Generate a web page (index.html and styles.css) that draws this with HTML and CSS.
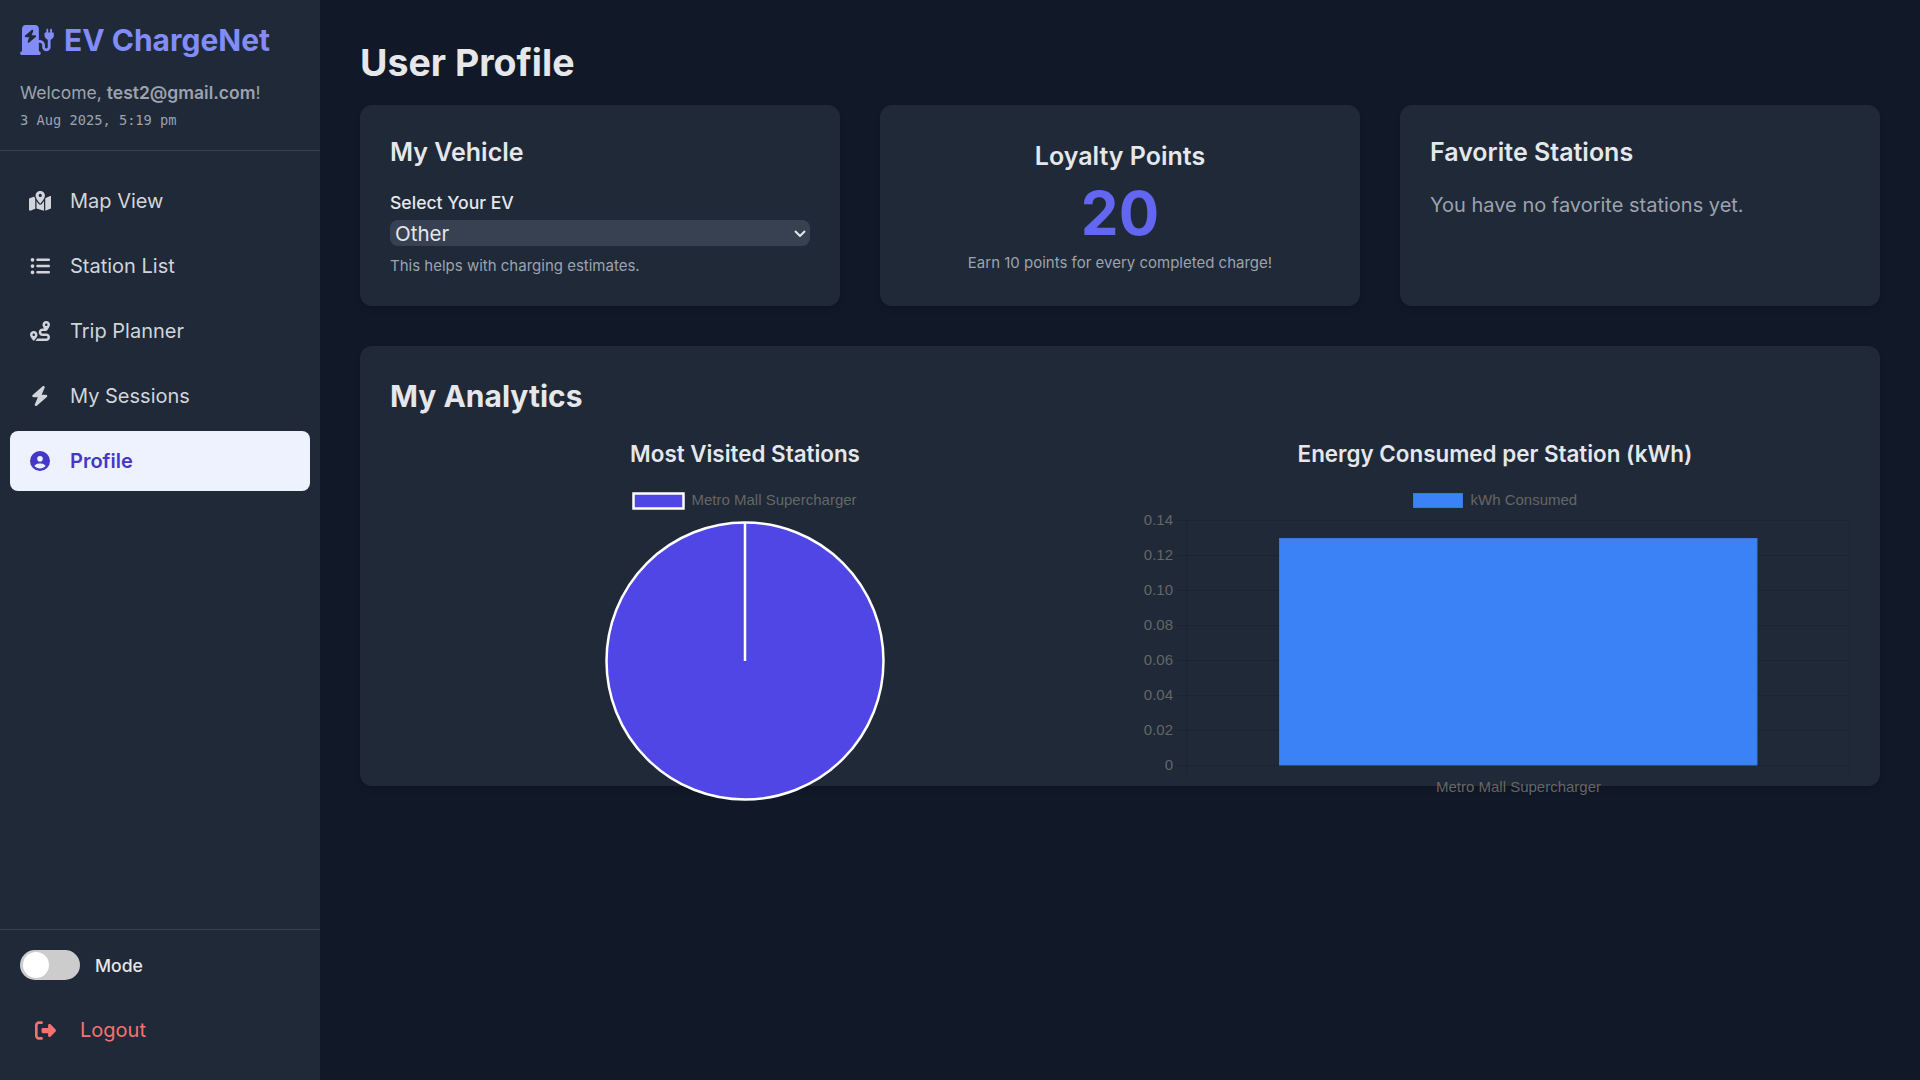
FILE: index.html
```html
<!DOCTYPE html>
<html lang="en">
<head>
<meta charset="utf-8">
<title>EV ChargeNet - User Profile</title>
<link rel="stylesheet" href="styles.css">
</head>
<body>
<div class="app">
  <aside class="sidebar">
    <header class="brand">
      <h1 class="logo">
        <svg class="logo-icon" viewBox="0 0 576 512"><path d="M96 0C60.7 0 32 28.7 32 64V448c-17.7 0-32 14.3-32 32s14.3 32 32 32H320c17.7 0 32-14.3 32-32s-14.3-32-32-32V304h16c22.1 0 40 17.9 40 40v32c0 39.8 32.2 72 72 72s72-32.2 72-72V252.3c32.5-10.2 56-40.5 56-76.3V144c0-8.8-7.2-16-16-16H544V80c0-8.8-7.2-16-16-16s-16 7.2-16 16v48H480V80c0-8.8-7.2-16-16-16s-16 7.2-16 16v48H432c-8.8 0-16 7.2-16 16v32c0 35.8 23.5 66.1 56 76.3V376c0 13.3-10.7 24-24 24s-24-10.7-24-24V344c0-48.6-39.4-88-88-88H320V64c0-35.3-28.7-64-64-64H96zM216.9 82.7c6 4 8.5 11.5 6.3 18.3l-25 74.9H256c6.7 0 12.7 4.2 15 10.4s.5 13.3-4.6 17.7l-112 96c-5.5 4.7-13.4 5.1-19.3 1.1s-8.5-11.5-6.3-18.3l25-74.9H96c-6.7 0-12.7-4.2-15-10.4s-.5-13.3 4.6-17.7l112-96c5.5-4.7 13.4-5.1 19.3-1.1z"/></svg>
        <span>EV ChargeNet</span>
      </h1>
      <p class="welcome">Welcome, <strong>test2@gmail.com</strong>!</p>
      <p class="clock">3 Aug 2025, 5:19 pm</p>
    </header>
    <nav class="nav">
      <a class="nav-item"><span class="nav-icon"><svg viewBox="0 0 576 512"><path d="M408 120c0 54.6-73.1 151.9-105.2 192c-7.7 9.6-22 9.6-29.6 0C241.1 271.9 168 174.6 168 120C168 53.7 221.7 0 288 0s120 53.7 120 120zm8 80.4c3.5-6.9 6.7-13.8 9.6-20.6c.5-1.2 1-2.5 1.5-3.7l116-46.4C558.9 123.4 576 135 576 152V422.8c0 9.8-6 18.6-15.1 22.3L416 503V200.4zM137.6 138.3c2.4 14.1 7.2 28.3 12.8 41.5c2.9 6.8 6.1 13.7 9.6 20.6V451.8L32.9 502.7C17.1 509 0 497.4 0 480.4V209.6c0-9.8 6-18.6 15.1-22.3l122.6-49zM327.8 332c13.9-17.4 35.7-45.7 56.2-77V504.3L192 449.4V255c20.5 31.3 42.3 59.6 56.2 77c20.5 25.6 59.1 25.6 79.6 0zM288 152a40 40 0 1 0 0-80 40 40 0 1 0 0 80z"/></svg></span>Map View</a>
      <a class="nav-item"><span class="nav-icon"><svg viewBox="0 0 512 512"><path d="M64 144a48 48 0 1 0 0-96 48 48 0 1 0 0 96zM192 64c-17.7 0-32 14.3-32 32s14.3 32 32 32H480c17.7 0 32-14.3 32-32s-14.3-32-32-32H192zm0 160c-17.7 0-32 14.3-32 32s14.3 32 32 32H480c17.7 0 32-14.3 32-32s-14.3-32-32-32H192zm0 160c-17.7 0-32 14.3-32 32s14.3 32 32 32H480c17.7 0 32-14.3 32-32s-14.3-32-32-32H192zM64 464a48 48 0 1 0 0-96 48 48 0 1 0 0 96zm48-208a48 48 0 1 0 -96 0 48 48 0 1 0 96 0z"/></svg></span>Station List</a>
      <a class="nav-item"><span class="nav-icon"><svg viewBox="0 0 512 512"><path d="M512 96c0 50.2-59.1 125.1-84.6 155c-3.8 4.4-9.4 6.1-14.5 5H320c-17.7 0-32 14.3-32 32s14.3 32 32 32h96c53 0 96 43 96 96s-43 96-96 96H139.6c8.7-9.9 19.3-22.6 30-36.8c6.3-8.4 12.8-17.6 19-27.2H416c17.7 0 32-14.3 32-32s-14.3-32-32-32H320c-53 0-96-43-96-96s43-96 96-96h39.8c-21-31.5-39.8-67.7-39.8-96c0-53 43-96 96-96s96 43 96 96zM117.1 489.1c-3.8 4.3-7.2 8.1-10.1 11.3l-1.8 2-.2-.2c-6 4.6-14.6 4-20-1.8C59.8 473 0 402.5 0 352c0-53 43-96 96-96s96 43 96 96c0 30-21.1 67-43.5 97.9c-10.7 14.7-21.7 28-30.8 38.5l-.6 .7zM128 352a32 32 0 1 0 -64 0 32 32 0 1 0 64 0zM416 128a32 32 0 1 0 0-64 32 32 0 1 0 0 64z"/></svg></span>Trip Planner</a>
      <a class="nav-item"><span class="nav-icon"><svg viewBox="0 0 448 512"><path d="M349.4 44.6c5.9-13.7 1.5-29.7-10.6-38.5s-28.6-8-39.9 1.8l-256 224c-10 8.8-13.6 22.9-8.9 35.3S50.7 288 64 288H175.5L98.6 467.4c-5.9 13.7-1.5 29.7 10.6 38.5s28.6 8 39.9-1.8l256-224c10-8.8 13.6-22.9 8.9-35.3s-16.6-20.7-30-20.7H272.5L349.4 44.6z"/></svg></span>My Sessions</a>
      <a class="nav-item active"><span class="nav-icon"><svg viewBox="0 0 512 512"><path d="M399 384.2C376.9 345.8 335.4 320 288 320H224c-47.4 0-88.9 25.8-111 64.2c35.2 39.2 86.2 63.8 143 63.8s107.8-24.7 143-63.8zM0 256a256 256 0 1 1 512 0A256 256 0 1 1 0 256zm256 16a72 72 0 1 0 0-144 72 72 0 1 0 0 144z"/></svg></span>Profile</a>
    </nav>
    <footer class="side-foot">
      <div class="mode-row">
        <span class="toggle"><span class="knob"></span></span>
        <span class="mode-label">Mode</span>
      </div>
      <a class="logout">
        <svg class="logout-icon" viewBox="0 0 512 512"><path d="M377.9 105.9L500.7 228.7c7.2 7.2 11.3 17.1 11.3 27.3s-4.1 20.1-11.3 27.3L377.9 406.1c-6.4 6.4-15 9.9-24 9.9c-18.7 0-33.9-15.2-33.9-33.9l0-62.1-128 0c-17.7 0-32-14.3-32-32l0-64c0-17.7 14.3-32 32-32l128 0 0-62.1c0-18.7 15.2-33.9 33.9-33.9c9 0 17.6 3.6 24 9.9zM160 96L96 96c-17.7 0-32 14.3-32 32l0 256c0 17.7 14.3 32 32 32l64 0c17.7 0 32 14.3 32 32s-14.3 32-32 32l-64 0c-53 0-96-43-96-96L0 128C0 75 43 32 96 32l64 0c17.7 0 32 14.3 32 32s-14.3 32-32 32z"/></svg>
        <span>Logout</span>
      </a>
    </footer>
  </aside>
  <main class="main">
    <h2 class="page-title">User Profile</h2>
    <section class="cards">
      <article class="card">
        <h3 class="card-title">My Vehicle</h3>
        <label class="field-label" for="ev">Select Your EV</label>
        <div class="select-wrap">
          <select class="ev-select" id="ev"><option>Other</option></select>
          <svg class="select-arrow" viewBox="0 0 12 7"><path d="M1 1l5 5 5-5"/></svg>
        </div>
        <p class="hint">This helps with charging estimates.</p>
      </article>
      <article class="card card-center">
        <h3 class="card-title">Loyalty Points</h3>
        <p class="points">20</p>
        <p class="earn">Earn 10 points for every completed charge!</p>
      </article>
      <article class="card">
        <h3 class="card-title">Favorite Stations</h3>
        <p class="empty">You have no favorite stations yet.</p>
      </article>
    </section>
    <section class="card analytics">
      <h3 class="analytics-title">My Analytics</h3>
      <div class="charts">
        <div class="chart">
          <h4 class="chart-title">Most Visited Stations</h4>
          <div class="chart-box">
            <svg class="chart-svg" viewBox="0 0 710 330" width="710" height="330">
              <rect class="pie-slice" x="243.5" y="13.5" width="50" height="15"/>
              <text class="axis-text" x="301.5" y="25">Metro Mall Supercharger</text>
              <circle class="pie-slice" cx="355" cy="181" r="138.5"/>
              <line class="pie-seam" x1="355" y1="42.5" x2="355" y2="181"/>
            </svg>
          </div>
        </div>
        <div class="chart">
          <h4 class="chart-title">Energy Consumed per Station (kWh)</h4>
          <div class="chart-box">
            <svg class="chart-svg" viewBox="0 0 710 330" width="710" height="330">
              <rect class="bar" x="273.5" y="13.5" width="49" height="14"/>
              <text class="axis-text" x="330.5" y="25">kWh Consumed</text>
              <g class="grid">
                <line x1="37" y1="40.5" x2="710" y2="40.5"/>
                <line x1="37" y1="75.5" x2="710" y2="75.5"/>
                <line x1="37" y1="110.5" x2="710" y2="110.5"/>
                <line x1="37" y1="145.5" x2="710" y2="145.5"/>
                <line x1="37" y1="180.5" x2="710" y2="180.5"/>
                <line x1="37" y1="215.5" x2="710" y2="215.5"/>
                <line x1="37" y1="250.5" x2="710" y2="250.5"/>
                <line x1="37" y1="285.5" x2="710" y2="285.5"/>
                <line x1="46.5" y1="40" x2="46.5" y2="295"/>
                <line x1="709.5" y1="40" x2="709.5" y2="295"/>
              </g>
              <g class="tick-labels">
                <text x="33" y="45">0.14</text>
                <text x="33" y="80">0.12</text>
                <text x="33" y="115">0.10</text>
                <text x="33" y="150">0.08</text>
                <text x="33" y="185">0.06</text>
                <text x="33" y="220">0.04</text>
                <text x="33" y="255">0.02</text>
                <text x="33" y="290">0</text>
              </g>
              <rect class="bar" x="139.5" y="58.5" width="477.5" height="226.5"/>
              <text class="axis-text axis-mid" x="378.5" y="312">Metro Mall Supercharger</text>
            </svg>
          </div>
        </div>
      </div>
    </section>
  </main>
</div>
</body>
</html>
```
FILE: styles.css
```css
* { box-sizing: border-box; }
html, body { margin: 0; height: 100%; }
body {
  font-family: Inter, "Liberation Sans", sans-serif;
  background: #111827;
  color: #e5e7eb;
}
h1, h2, h3, h4, p { margin: 0; }

.app { display: flex; height: 100vh; overflow: hidden; }

.sidebar {
  width: 320px;
  flex: none;
  background: #1f2937;
  display: flex;
  flex-direction: column;
}
.brand {
  padding: 20px 20px 0;
  height: 151px;
  border-bottom: 1px solid #374151;
}
.logo {
  display: flex;
  align-items: center;
  gap: 10px;
  font-size: 30px;
  line-height: 40px;
  font-weight: 700;
  color: #818cf8;
}
.logo-icon { width: 34px; height: 30px; fill: currentColor; }
.welcome {
  margin-top: 21px;
  font-size: 17.5px;
  line-height: 24px;
  color: #9ca3af;
}
.welcome strong { font-weight: 600; color: #9ca3af; }
.clock {
  margin-top: 6px;
  font-family: "DejaVu Sans Mono", monospace;
  font-size: 13.7px;
  line-height: 18px;
  color: #9ca3af;
}

.nav {
  flex: 1;
  padding: 20px 10px;
  display: flex;
  flex-direction: column;
  gap: 5px;
}
.nav-item {
  height: 60px;
  padding-left: 18px;
  display: flex;
  align-items: center;
  gap: 18px;
  border-radius: 8px;
  font-size: 20px;
  font-weight: 400;
  color: #d1d5db;
}
.nav-icon { width: 24px; height: 20px; display: flex; justify-content: center; }
.nav-icon svg { height: 20px; fill: currentColor; }
.nav-item.active { background: #eef2ff; color: #4338ca; font-weight: 600; }

.side-foot {
  height: 151px;
  padding: 20px 20px 0;
  border-top: 1px solid #374151;
}
.mode-row { display: flex; align-items: center; gap: 15px; }
.toggle {
  width: 60px;
  height: 30px;
  padding: 2px 3px;
  border-radius: 15px;
  background: #ccc;
}
.knob { display: block; width: 26px; height: 26px; border-radius: 50%; background: #fff; }
.mode-label { font-size: 17.6px; font-weight: 500; color: #e5e7eb; }
.logout {
  margin-top: 20px;
  padding-left: 15px;
  height: 60px;
  display: flex;
  align-items: center;
  gap: 24px;
  font-size: 20px;
  color: #f87171;
}
.logout-icon { width: 21px; height: 21px; fill: currentColor; }

.main { flex: 1; padding: 40px; min-width: 0; }
.page-title {
  font-size: 37.5px;
  line-height: 46px;
  font-weight: 700;
  color: #e5e7eb;
  margin-bottom: 19px;
}
.cards { display: grid; grid-template-columns: repeat(3, 1fr); gap: 40px; }
.card {
  background: #1f2937;
  border-radius: 12px;
  padding: 30px;
  box-shadow: 0 4px 6px rgba(0, 0, 0, .1);
}
.cards .card { height: 201px; }
.card-title { font-size: 25px; line-height: 34px; font-weight: 600; color: #e5e7eb; }
.card-center { display: flex; flex-direction: column; align-items: center; justify-content: center; }
.field-label {
  display: block;
  margin-top: 22px;
  font-size: 17.6px;
  line-height: 24px;
  font-weight: 500;
  color: #e5e7eb;
}
.select-wrap { position: relative; margin-top: 5px; }
.ev-select {
  display: block;
  width: 100%;
  height: 26px;
  padding: 0 5px;
  appearance: none;
  background: #374151;
  color: #e5e7eb;
  border: 0;
  border-radius: 8px;
  font-family: Inter, sans-serif;
  font-size: 20.5px;
}
.select-arrow {
  position: absolute;
  right: 4px;
  top: 10px;
  width: 12px;
  height: 7px;
  fill: none;
  stroke: #e5e7eb;
  stroke-width: 2;
}
.hint { margin-top: 10px; font-size: 15px; line-height: 20px; color: #9ca3af; }
.points { margin-top: 6px; font-size: 60px; line-height: 68px; font-weight: 700; color: #6366f1; }
.earn { margin-top: 6px; font-size: 15px; line-height: 20px; color: #9ca3af; }
.empty { margin-top: 22px; font-size: 20px; line-height: 28px; color: #9ca3af; }

.analytics { margin-top: 40px; height: 440px; }
.analytics-title { font-size: 30px; line-height: 40px; font-weight: 700; color: #e5e7eb; }
.charts { display: grid; grid-template-columns: 1fr 1fr; gap: 40px; margin-top: 24px; }
.chart-title {
  text-align: center;
  font-size: 22.4px;
  line-height: 28px;
  font-weight: 600;
  color: #e5e7eb;
}
.chart-box { height: 276px; margin-top: 12px; }
.chart-svg { display: block; overflow: visible; }

.axis-text, .tick-labels { font-family: "Liberation Sans", Arial, sans-serif; font-size: 15px; fill: #666; }
.axis-mid { text-anchor: middle; }
.tick-labels { text-anchor: end; }
.pie-slice { fill: #4f46e5; stroke: #fff; stroke-width: 2.5; }
.pie-seam { stroke: #fff; stroke-width: 2.5; }
.bar { fill: #3b82f6; stroke: #3a78e0; stroke-width: 1; }
.grid line { stroke: rgba(0, 0, 0, .1); stroke-width: 1; }
```
